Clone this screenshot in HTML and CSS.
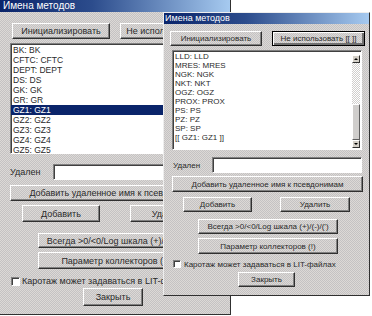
FILE: index.html
```html
<!DOCTYPE html>
<html lang="ru">
<head>
    <meta charset="UTF-8">
    <title>Имена методов</title>
    <link rel="stylesheet" href="styles.css">
</head>
<body>
    <div class="desktop">

        <div class="win win-back">
            <div class="titlebar">Имена методов</div>

            <div class="row top-row">
                <div class="btn w98">Инициализировать</div>
                <div class="btn w98">Не использовать [[ ]]</div>
            </div>

            <div class="listbox">
                <div class="item">BK: BK</div>
                <div class="item">CFTC: CFTC</div>
                <div class="item">DEPT: DEPT</div>
                <div class="item">DS: DS</div>
                <div class="item">GK: GK</div>
                <div class="item">GR: GR</div>
                <div class="item selected">GZ1: GZ1</div>
                <div class="item">GZ2: GZ2</div>
                <div class="item">GZ3: GZ3</div>
                <div class="item">GZ4: GZ4</div>
                <div class="item">GZ5: GZ5</div>
            </div>

            <div class="row field-row">
                <span class="label">Удален</span>
                <div class="input"></div>
            </div>

            <div class="btn add-btn">Добавить удаленное имя к псевдонимам</div>

            <div class="row pair-row">
                <div class="btn">Добавить</div>
                <div class="btn">Удалить</div>
            </div>

            <div class="btn wide-btn always-btn">Всегда &gt;0/&lt;0/Log шкала (+)/(-)/(')</div>
            <div class="btn wide-btn param-btn">Параметр коллекторов (!)</div>

            <div class="row check-row">
                <span class="checkbox"></span>
                <span>Каротаж может задаваться в LIT-файлах</span>
            </div>

            <div class="btn close-btn">Закрыть</div>
        </div>

        <div class="win win-front">
            <div class="titlebar">Имена методов</div>

            <div class="row top-row">
                <div class="btn">Инициализировать</div>
                <div class="btn default">Не использовать [[ ]]</div>
            </div>

            <div class="listbox">
                <div class="items">
                    <div class="item">LLD: LLD</div>
                    <div class="item">MRES: MRES</div>
                    <div class="item">NGK: NGK</div>
                    <div class="item">NKT: NKT</div>
                    <div class="item">OGZ: OGZ</div>
                    <div class="item">PROX: PROX</div>
                    <div class="item">PS: PS</div>
                    <div class="item">PZ: PZ</div>
                    <div class="item">SP: SP</div>
                    <div class="item">[[ GZ1: GZ1 ]]</div>
                </div>
                <div class="scrollbar">
                    <div class="arrow up"></div>
                    <div class="track"><div class="thumb"></div></div>
                    <div class="arrow down"></div>
                </div>
            </div>

            <div class="row field-row">
                <span class="label">Удален</span>
                <div class="input"></div>
            </div>

            <div class="btn add-btn">Добавить удаленное имя к псевдонимам</div>

            <div class="row pair-row">
                <div class="btn">Добавить</div>
                <div class="btn">Удалить</div>
            </div>

            <div class="btn wide-btn always-btn">Всегда &gt;0/&lt;0/Log шкала (+)/(-)/(')</div>
            <div class="btn wide-btn param-btn">Параметр коллекторов (!)</div>

            <div class="row check-row">
                <span class="checkbox"></span>
                <span>Каротаж может задаваться в LIT-файлах</span>
            </div>

            <div class="btn close-btn">Закрыть</div>
        </div>

    </div>
</body>
</html>
```

FILE: styles.css
```css
* {
    box-sizing: border-box;
}

body {
    margin: 0;
    background: #fff;
    font-family: 'Liberation Sans', Arial, sans-serif;
    color: #2a2a2a;
}

.desktop {
    position: relative;
    width: 372px;
    height: 316px;
    overflow: hidden;
    background: #fff;
}

/* windows sit on the desktop at their own places */
.win {
    position: absolute;
    display: flex;
    flex-direction: column;
    align-items: flex-start;
    background-color: #cfcdcc;
    background-image: repeating-conic-gradient(#c4c2c3 0 25%, #dcd9d6 0 50%);
    background-size: 2px 2px;
}

.win > * {
    flex-shrink: 0;
}

.win-back {
    left: 0;
    top: 0;
    width: 231px;
    height: 315px;
    border-right: 1px solid #303030;
    border-bottom: 1px solid #303030;
    font-size: 9px;
}

.win-front {
    left: 163px;
    top: 12px;
    width: 207px;
    height: 284px;
    border: 1px solid;
    border-color: #eeeeee #303030 #303030 #eeeeee;
    font-size: 8px;
    z-index: 2;
}

.titlebar {
    width: 100%;
    color: #fff;
    background: linear-gradient(to right, #0a246a, #2c4c8c 40%, #a6caf0);
    white-space: nowrap;
}

.win-back .titlebar {
    height: 12px;
    line-height: 12px;
    font-size: 10px;
    padding-left: 3px;
}

.win-front .titlebar {
    height: 11px;
    line-height: 11px;
    font-size: 9px;
    padding-left: 1px;
}

.row {
    display: flex;
    align-items: center;
}

.btn {
    display: flex;
    align-items: center;
    justify-content: center;
    white-space: nowrap;
    overflow: hidden;
    border: 1px solid;
    border-color: #ffffff #303030 #303030 #ffffff;
    box-shadow: inset -1px -1px #808080;
}

.btn.default {
    border-color: #000;
    box-shadow: inset 1px 1px #fff, inset -2px -2px #707070;
}

.listbox {
    display: flex;
    background: #fff;
    border: 1px solid;
    border-color: #808080 #ffffff #ffffff #808080;
    box-shadow: inset 1px 1px #404040;
    overflow: hidden;
}

.item {
    padding-left: 2px;
    white-space: nowrap;
}

.item.selected {
    background: #0a246a;
    color: #fff;
}

.input {
    background: #fff;
    border: 1px solid;
    border-color: #808080 #ffffff #ffffff #808080;
    box-shadow: inset 1px 1px #404040;
}

.checkbox {
    background: #fff;
    border: 1px solid;
    border-color: #808080 #ffffff #ffffff #808080;
    box-shadow: inset 1px 1px #404040;
}

.check-row span:last-child {
    white-space: nowrap;
}

/* back window: pixel plan of the bigger dialog */
.win-back .top-row {
    margin: 11px 0 0 12px;
    height: 16px;
    gap: 10px;
}

.win-back .top-row .btn {
    width: 98px;
    height: 16px;
}

.win-back .listbox {
    flex-direction: column;
    margin: 4px 0 0 10px;
    width: 210px;
    height: 111px;
    padding-top: 1px;
    font-size: 8.5px;
}

.win-back .item {
    line-height: 10px;
    height: 10px;
}

.win-back .field-row {
    margin: 10px 0 0 10px;
    height: 16px;
}

.win-back .label {
    width: 43px;
}

.win-back .input {
    width: 167px;
    height: 16px;
}

.win-back .add-btn {
    margin: 5px 0 0 10px;
    width: 210px;
    height: 16px;
}

.win-back .pair-row {
    margin: 4px 0 0 22px;
    gap: 30px;
}

.win-back .pair-row .btn {
    width: 78px;
    height: 17px;
}

.win-back .wide-btn {
    margin-left: 38px;
    width: 154px;
}

.win-back .always-btn {
    margin-top: 11px;
    height: 15px;
}

.win-back .param-btn {
    margin-top: 4px;
    height: 17px;
}

.win-back .check-row {
    margin: 6px 0 0 11px;
    height: 12px;
    gap: 2px;
}

.win-back .checkbox {
    width: 9px;
    height: 9px;
}

.win-back .close-btn {
    margin: 1px 0 0 83px;
    width: 60px;
    height: 18px;
}

/* front window: the smaller dialog */
.win-front .top-row {
    margin: 7px 0 0 6px;
    height: 15px;
    gap: 10px;
}

.win-front .top-row .btn {
    width: 92px;
    height: 15px;
}

.win-front .top-row .btn.default {
    width: 93px;
}

.win-front .listbox {
    margin: 4px 0 0 8px;
    width: 190px;
    height: 100px;
}

.win-front .items {
    flex: 1;
    padding-top: 1px;
}

.win-front .item {
    line-height: 9px;
    height: 9px;
}

.scrollbar {
    width: 9px;
    display: flex;
    flex-direction: column;
    padding: 4px 1px 1px 0;
}

.arrow {
    position: relative;
    height: 8px;
    background: #d4d0c8;
    border: 1px solid;
    border-color: #ffffff #303030 #303030 #ffffff;
}

/* small black triangles inside the scroll arrows */
.arrow::after {
    content: "";
    position: absolute;
    left: 1px;
    border-left: 2px solid transparent;
    border-right: 2px solid transparent;
}

.arrow.up::after {
    top: 2px;
    border-bottom: 2px solid #000;
}

.arrow.down::after {
    top: 2px;
    border-top: 2px solid #000;
}

.track {
    flex: 1;
    display: flex;
    flex-direction: column;
    justify-content: flex-end;
    background-color: #e8e6e4;
    background-image: repeating-conic-gradient(#ffffff 0 25%, #d0cecc 0 50%);
    background-size: 2px 2px;
}

.thumb {
    height: 36px;
    border: 1px solid;
    border-color: #ffffff #606060 #606060 #ffffff;
    background: #d0cecc;
}

.win-front .field-row {
    margin: 7px 0 0 9px;
    height: 16px;
}

.win-front .label {
    width: 39px;
}

.win-front .input {
    width: 150px;
    height: 16px;
}

.win-front .add-btn {
    margin: 3px 0 0 8px;
    width: 191px;
    height: 16px;
}

.win-front .pair-row {
    margin: 5px 0 0 19px;
    gap: 28px;
}

.win-front .pair-row .btn {
    width: 69px;
    height: 15px;
}

.win-front .pair-row .btn:last-child {
    width: 70px;
}

.win-front .wide-btn {
    margin-left: 34px;
    width: 140px;
}

.win-front .always-btn {
    margin-top: 7px;
    height: 15px;
}

.win-front .param-btn {
    margin-top: 4px;
    height: 16px;
}

.win-front .check-row {
    margin: 5px 0 0 9px;
    height: 10px;
    gap: 3px;
}

.win-front .checkbox {
    width: 8px;
    height: 8px;
}

.win-front .close-btn {
    margin: 3px 0 0 74px;
    width: 57px;
    height: 15px;
}
```
